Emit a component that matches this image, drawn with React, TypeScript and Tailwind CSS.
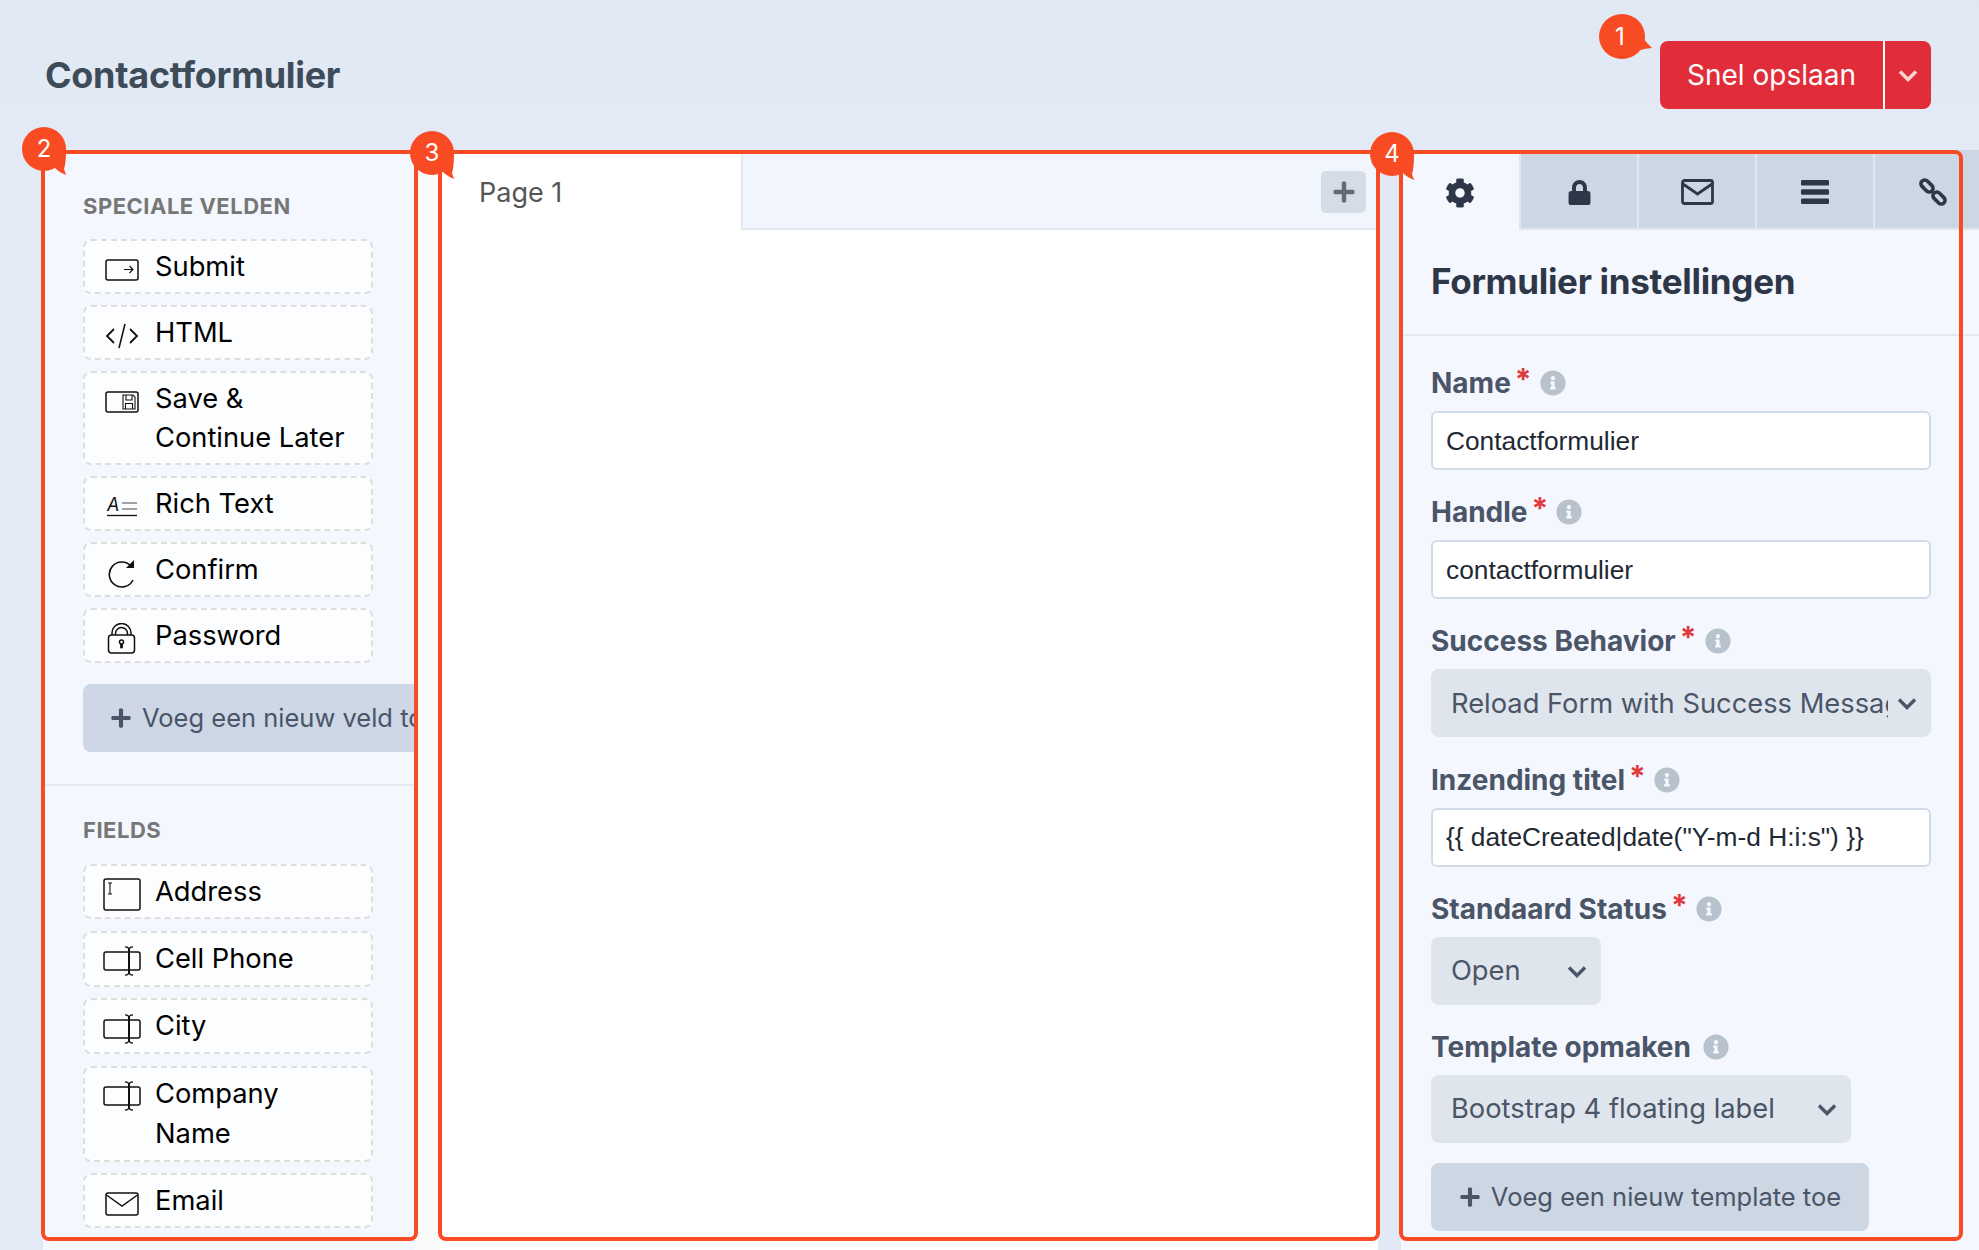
import type { ReactNode } from 'react';
import { FaCog, FaInfoCircle, FaLock, FaPlus } from 'react-icons/fa';

const SubmitIcon = () => (
  <svg width="34" height="22" viewBox="0 0 34 22" fill="none" stroke="#111" strokeWidth="1.5">
    <rect x="1" y="1" width="32" height="20" rx="2" />
    <path d="M19 10.5H28M24.5 7L28 10.5L24.5 14" strokeWidth="1.1" />
  </svg>
);

const CodeIcon = () => (
  <svg width="34" height="28" viewBox="0 0 34 28" fill="none" stroke="#111" strokeWidth="1.8">
    <path d="M9 7L2 14L9 21M25 7L32 14L25 21" />
    <path d="M20 2L14 26" strokeWidth="1.5" />
  </svg>
);

const SaveIcon = () => (
  <svg width="34" height="22" viewBox="0 0 34 22" fill="none" stroke="#111" strokeWidth="1.5">
    <rect x="1" y="1" width="32" height="20" rx="2" />
    <path d="M18 4H28L30 6V18H18Z" strokeWidth="1.1" />
    <path d="M21 4V9H27V4M20.5 18V12.5H27.5V18" strokeWidth="1.1" />
  </svg>
);

const RichTextIcon = () => (
  <svg width="32" height="24" viewBox="0 0 32 24" fill="none" stroke="#111">
    <text x="1" y="16" fontSize="18" fontStyle="italic" fontFamily="Inter, sans-serif" fill="#111" stroke="none">
      A
    </text>
    <path d="M16 8H31M16 14H31" stroke="#444" strokeWidth="1.1" />
    <path d="M1 20.5H31" strokeWidth="1.3" />
  </svg>
);

const RotateIcon = () => (
  <svg width="30" height="30" viewBox="0 0 30 30" fill="none" stroke="#111" strokeWidth="1.6">
    <path d="M24 8A12.5 12.5 0 1 0 26 22" />
    <path d="M27 2V10H19Z" fill="#111" stroke="none" />
  </svg>
);

const PadlockIcon = () => (
  <svg width="30" height="32" viewBox="0 0 30 32" fill="none" stroke="#111" strokeWidth="1.5">
    <rect x="1.5" y="12" width="26" height="18" rx="3" />
    <path d="M5 12V10A9.5 9.5 0 0 1 24 10V12M8.5 12V10.5A6 6 0 0 1 20.5 10.5V12" />
    <circle cx="14.5" cy="19" r="2" />
    <path d="M13.5 21H15.5V25H13.5Z" fill="#111" strokeWidth="0.8" />
  </svg>
);

const TextareaIcon = () => (
  <svg width="38" height="33" viewBox="0 0 38 33" fill="none" stroke="#111" strokeWidth="1.5">
    <rect x="1" y="1" width="36" height="31" rx="2" />
    <path d="M5 5H9M7 5V16M5 16H9" strokeWidth="1.1" />
  </svg>
);

const TextIcon = () => (
  <svg width="38" height="30" viewBox="0 0 38 30" fill="none" stroke="#111" strokeWidth="1.5">
    <rect x="1" y="6" width="36" height="18" rx="2" />
    <path d="M26 3V27" strokeWidth="2" />
    <path d="M22 .8Q26 1 26 4Q26 1 30 .8M22 29.2Q26 29 26 26Q26 29 30 29.2" strokeWidth="1.2" />
  </svg>
);

const EnvelopeIcon = () => (
  <svg width="34" height="24" viewBox="0 0 34 24" fill="none" stroke="#111" strokeWidth="1.5">
    <rect x="1" y="1" width="32" height="22" rx="2" />
    <path d="M1.5 3L17 14L32.5 3" />
  </svg>
);

const TabEnvelope = () => (
  <svg width="33" height="26" viewBox="0 0 33 26" fill="none" stroke="currentColor" strokeWidth="2.8">
    <rect x="1.5" y="1.5" width="30" height="23" rx="2" />
    <path d="M2 5L16.5 15L31 5" />
  </svg>
);

const TabBars = () => (
  <svg width="28" height="24" viewBox="0 0 28 24" fill="currentColor">
    <rect width="28" height="5.4" rx="1.2" />
    <rect y="9.3" width="28" height="5.4" rx="1.2" />
    <rect y="18.6" width="28" height="5.4" rx="1.2" />
  </svg>
);

const TabLink = () => (
  <svg width="32" height="32" viewBox="0 0 32 32" fill="none" stroke="currentColor" strokeWidth="3.6">
    <rect x="3" y="6.25" width="14" height="7.5" rx="3.75" transform="rotate(45 10 10)" />
    <rect x="15" y="18.25" width="14" height="7.5" rx="3.75" transform="rotate(45 22 22)" />
  </svg>
);

const Chevron = ({ className }: { className: string }) => (
  <svg width="20" height="13" viewBox="0 0 20 13" fill="none" stroke="currentColor" strokeWidth="3.4" className={className}>
    <path d="M2 2.5L10 10.5L18 2.5" />
  </svg>
);

const FieldItem = ({ icon, label, leading }: { icon: ReactNode; label: ReactNode; leading: string }) => (
  <div className={`flex items-start rounded-lg border-2 border-dashed border-[#dedede] bg-[#fbfdff] py-[6px] pr-2 pl-[18px] text-[27.3px] text-black ${leading}`}>
    <span className="mt-[6px] mr-[14px] flex h-[33px] w-[38px] shrink-0 items-center justify-center">{icon}</span>
    <span>{label}</span>
  </div>
);

const Label = ({ children, required = true }: { children: string; required?: boolean }) => (
  <div className="mb-[13px] flex h-[30px] items-center text-[28px] font-bold text-[#4a5568]">
    <span>{children}</span>
    {required && <span className="mb-[8px] ml-[4px] text-[30px] font-bold leading-none text-[#e0393e]">*</span>}
    <FaInfoCircle className={required ? 'ml-[8px] text-[26px] text-[#b8c2cc]' : 'ml-[12px] text-[26px] text-[#b8c2cc]'} />
  </div>
);

const TextInput = ({ value }: { value: string }) => (
  <input
    className="h-[59px] w-[500px] rounded-md border-2 border-[#d2dce8] bg-white px-[13px] pt-[1px] font-['Liberation_Sans',sans-serif] text-[26.3px] text-[#1f2933]"
    defaultValue={value}
    type="text"
  />
);

const SelectBox = ({ value, width, clip }: { value: string; width: string; clip?: boolean }) => (
  <div className={`relative flex h-[68px] items-center rounded-lg bg-[#dfe5ec] pt-[2px] pl-[20px] text-[27.3px] text-[#4a5568] ${width}`}>
    <span className={clip ? 'w-[437px] overflow-hidden whitespace-nowrap' : 'whitespace-nowrap'}>{value}</span>
    <Chevron className="absolute right-[14px] top-[28px] text-[#4a5568]" />
  </div>
);

const tabIcons = [
  <FaLock key="lock" className="text-[25px]" />,
  <TabEnvelope key="mail" />,
  <TabBars key="bars" />,
  <TabLink key="link" />,
];

const Bubble = ({ n, className }: { n: number; className: string }) => (
  <div className={`pointer-events-none absolute h-[50px] w-[50px] ${className}`}>
    <svg width="50" height="50" viewBox="0 0 50 50" className="absolute inset-0">
      <circle cx="22" cy="22" r="22" fill="#f84b24" />
      <path d="M44 22Q44 36 42 42Q43 46 44.5 48Q38 46 33 41Z" fill="#f84b24" />
    </svg>
    <span className="absolute top-0 left-0 flex h-[44px] w-[44px] items-center justify-center text-[24px] text-white">{n}</span>
  </div>
);

const BubbleSide = ({ n, className }: { n: number; className: string }) => (
  <div className={`pointer-events-none absolute h-[50px] w-[56px] ${className}`}>
    <svg width="56" height="50" viewBox="0 0 56 50" className="absolute inset-0">
      <ellipse cx="23" cy="22.5" rx="23" ry="22.5" fill="#f84b24" />
      <path d="M37 5Q41 24 53 34Q40 34 26 44Z" fill="#f84b24" />
    </svg>
    <span className="absolute top-0 left-0 flex h-[45px] w-[42px] items-center justify-center text-[24px] text-white">{n}</span>
  </div>
);

export default function App() {
  return (
    <div className="relative flex h-[1250px] w-[1979px] flex-col overflow-hidden bg-[#e3eaf5] font-[Inter,sans-serif]">
      <header className="flex h-[150px] shrink-0 items-start justify-between bg-gradient-to-b from-[#dfe8f3] to-[#e4ebf6] pt-[41px] pr-[48px] pl-[45px]">
        <h1 className="text-[36px] font-bold leading-[68px] tracking-[-0.3px] text-[#3e4c59]">Contactformulier</h1>
        <div className="flex h-[68px] w-[271px] rounded-lg bg-[#e12d39] text-white">
          <span className="flex w-[223px] items-center justify-center text-[28px]">Snel opslaan</span>
          <span className="flex flex-1 items-center justify-center border-l-2 border-white text-[#fbd5d5]">
            <Chevron className="" />
          </span>
        </div>
      </header>

      <div className="flex min-h-0 flex-1">
        <aside className="ml-[43px] w-[371px] shrink-0 overflow-hidden bg-[#f4f7fe]">
          <section className="border-b-2 border-[#e4e8f0] pt-[44px] pr-[41px] pb-[32px] pl-[40px]">
            <h2 className="mb-[21px] text-[22px] font-bold uppercase leading-[24px] tracking-[0.5px] text-[#777]">Speciale velden</h2>
            <div className="flex flex-col gap-[11px]">
              <FieldItem icon={<SubmitIcon />} label="Submit" leading="leading-[39px]" />
              <FieldItem icon={<CodeIcon />} label="HTML" leading="leading-[39px]" />
              <FieldItem icon={<SaveIcon />} label={<>Save &amp;<br />Continue Later</>} leading="leading-[39px]" />
              <FieldItem icon={<RichTextIcon />} label="Rich Text" leading="leading-[39px]" />
              <FieldItem icon={<RotateIcon />} label="Confirm" leading="leading-[39px]" />
              <FieldItem icon={<PadlockIcon />} label="Password" leading="leading-[39px]" />
            </div>
            <div className="mt-[21px] flex h-[68px] w-max items-center rounded-lg bg-[#cdd7e5] px-[27px] text-[25.5px] text-[#4a5568]">
              <FaPlus className="mr-[10px] text-[22px]" />
              <span className="whitespace-nowrap">Voeg een nieuw veld toe</span>
            </div>
          </section>
          <section className="pt-[32px] pr-[41px] pl-[40px]">
            <h2 className="mb-[22px] text-[22px] font-bold uppercase leading-[24px] tracking-[0.5px] text-[#777]">Fields</h2>
            <div className="flex flex-col gap-[11.5px]">
              <FieldItem icon={<TextareaIcon />} label="Address" leading="leading-[39px]" />
              <FieldItem icon={<TextIcon />} label="Cell Phone" leading="leading-[40px]" />
              <FieldItem icon={<TextIcon />} label="City" leading="leading-[40px]" />
              <FieldItem icon={<TextIcon />} label={<>Company<br />Name</>} leading="leading-[40px]" />
              <FieldItem icon={<EnvelopeIcon />} label="Email" leading="leading-[39px]" />
            </div>
          </section>
        </aside>

        <div className="w-[26px] shrink-0 bg-[#fafafa]" />

        <main className="flex w-[938px] shrink-0 flex-col bg-white">
          <div className="flex h-[80px] shrink-0">
            <div className="flex w-[301px] items-center pt-[7px] pl-[39px] text-[27px] text-[#555]">Page 1</div>
            <div className="flex flex-1 items-center justify-end border-b-2 border-l-2 border-[#e4e7ed] bg-[#f1f5fe] pt-[6px] pr-[12px]">
              <span className="flex h-[42px] w-[45px] items-center justify-center rounded-[5px] bg-[#d5dce6] text-[24px] text-[#5f6c7b]">
                <FaPlus />
              </span>
            </div>
          </div>
        </main>

        <div className="w-[23px] shrink-0 bg-[#e2e9f4]" />

        <div className="min-w-0 flex-1 overflow-hidden bg-[#f4f7fe]">
          <div className="flex h-[80px] w-[620px] text-[#2d3748]">
            <div className="flex w-[118px] items-center justify-center pt-[6px]">
              <FaCog className="text-[30px]" />
            </div>
            {tabIcons.map((icon) => (
              <div className="flex w-[118px] items-center justify-center border-b-2 border-l-2 border-[#e0e6ee] bg-[#cdd7e3] pt-[6px]" key={icon.key}>
                {icon}
              </div>
            ))}
          </div>
          <div className="flex h-[106px] items-center border-b-2 border-[#e2e8f0] pb-[1px] pl-[30px]">
            <h2 className="text-[35px] font-bold tracking-[-0.3px] text-[#2d3748]">Formulier instellingen</h2>
          </div>
          <form className="flex flex-col items-start gap-[27.2px] pt-[32px] pl-[30px]">
            <div>
              <Label>Name</Label>
              <TextInput value="Contactformulier" />
            </div>
            <div>
              <Label>Handle</Label>
              <TextInput value="contactformulier" />
            </div>
            <div>
              <Label>Success Behavior</Label>
              <SelectBox clip value="Reload Form with Success Message" width="w-[500px]" />
            </div>
            <div>
              <Label>Inzending titel</Label>
              <TextInput value={'{{ dateCreated|date("Y-m-d H:i:s") }}'} />
            </div>
            <div>
              <Label>Standaard Status</Label>
              <SelectBox value="Open" width="w-[170px]" />
            </div>
            <div>
              <Label required={false}>Template opmaken</Label>
              <SelectBox value="Bootstrap 4 floating label" width="w-[420px]" />
              <div className="mt-[20px] flex h-[68px] w-[438px] items-center justify-center rounded-lg bg-[#cdd7e3] text-[25.5px] text-[#4a5568]">
                <FaPlus className="mr-[10px] text-[22px]" />
                <span className="whitespace-nowrap">Voeg een nieuw template toe</span>
              </div>
            </div>
          </form>
        </div>
      </div>

      {/* annotation frames lying over the screenshot */}
      <div className="pointer-events-none absolute top-[150px] left-[41px] h-[1091px] w-[377px] rounded-lg border-4 border-[#f84b24]" />
      <div className="pointer-events-none absolute top-[150px] left-[438px] h-[1091px] w-[942px] rounded-lg border-4 border-[#f84b24]" />
      <div className="pointer-events-none absolute top-[150px] left-[1399px] h-[1091px] w-[564px] rounded-lg border-4 border-[#f84b24]" />

      <BubbleSide n={1} className="top-[14px] left-[1599px]" />
      <Bubble n={2} className="top-[127px] left-[22px]" />
      <Bubble n={3} className="top-[131px] left-[410px]" />
      <Bubble n={4} className="top-[132px] left-[1370px]" />
    </div>
  );
}
